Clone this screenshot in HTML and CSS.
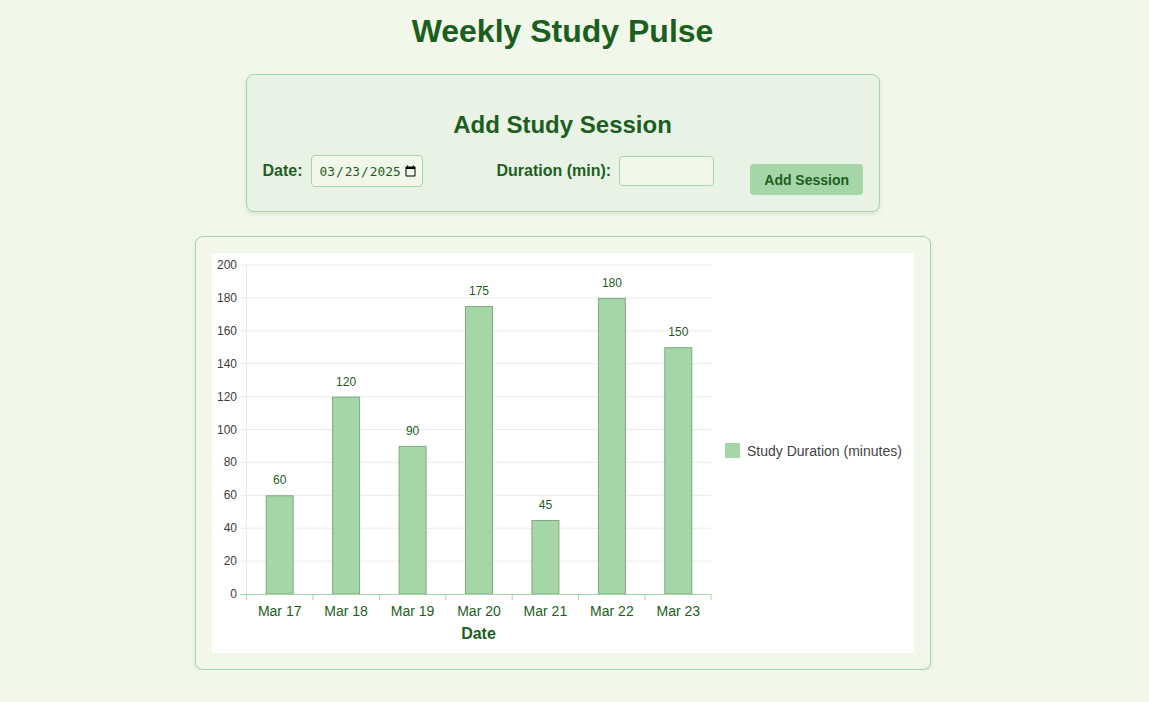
FILE: index.html
```html
<!DOCTYPE html>
<html lang="en">
<head>
    <meta charset="utf-8">
    <meta name="viewport" content="width=device-width, initial-scale=1">
    <title>Weekly Study Pulse</title>
    <link rel="stylesheet" href="styles.css">
</head>
<body>
    <div class="page">
        <h1 class="title">Weekly Study Pulse</h1>

        <!-- Session form -->
        <div class="form-card">
            <h2>Add Study Session</h2>
            <div class="form-row">
                <div class="form-group date-group">
                    <label for="date">Date:</label>
                    <input type="date" id="date" class="date-input" value="2025-03-23">
                </div>
                <div class="form-group duration-group">
                    <label for="duration">Duration (min):</label>
                    <input type="number" id="duration" class="duration-input">
                </div>
                <button class="add-btn">Add Session</button>
            </div>
        </div>

        <!-- Chart -->
        <div class="chart-card">
            <div class="chart-canvas">
                <svg width="702" height="400" viewBox="0 0 702 400">
                    <g class="grid">
                        <line x1="28" y1="12" x2="499" y2="12"/>
                        <line x1="28" y1="44.9" x2="499" y2="44.9"/>
                        <line x1="28" y1="77.8" x2="499" y2="77.8"/>
                        <line x1="28" y1="110.7" x2="499" y2="110.7"/>
                        <line x1="28" y1="143.6" x2="499" y2="143.6"/>
                        <line x1="28" y1="176.5" x2="499" y2="176.5"/>
                        <line x1="28" y1="209.4" x2="499" y2="209.4"/>
                        <line x1="28" y1="242.3" x2="499" y2="242.3"/>
                        <line x1="28" y1="275.2" x2="499" y2="275.2"/>
                        <line x1="28" y1="308.1" x2="499" y2="308.1"/>
                        <line x1="34.5" y1="12" x2="34.5" y2="341"/>
                    </g>
                    <g class="y-ticks">
                        <text x="25" y="16">200</text>
                        <text x="25" y="48.9">180</text>
                        <text x="25" y="81.8">160</text>
                        <text x="25" y="114.7">140</text>
                        <text x="25" y="147.6">120</text>
                        <text x="25" y="180.5">100</text>
                        <text x="25" y="213.4">80</text>
                        <text x="25" y="246.3">60</text>
                        <text x="25" y="279.2">40</text>
                        <text x="25" y="312.1">20</text>
                        <text x="25" y="345">0</text>
                    </g>
                    <g class="bars">
                        <rect x="54.2" y="242.8" width="27" height="98.2"/>
                        <rect x="120.6" y="144.1" width="27" height="196.9"/>
                        <rect x="187.1" y="193.4" width="27" height="147.6"/>
                        <rect x="253.5" y="53.6" width="27" height="287.4"/>
                        <rect x="319.9" y="267.5" width="27" height="73.5"/>
                        <rect x="386.4" y="45.4" width="27" height="295.6"/>
                        <rect x="452.8" y="94.7" width="27" height="246.3"/>
                    </g>
                    <g class="x-axis">
                        <line x1="28" y1="341.5" x2="499" y2="341.5"/>
                        <line x1="34.5" y1="341" x2="34.5" y2="347"/>
                        <line x1="100.9" y1="341" x2="100.9" y2="347"/>
                        <line x1="167.4" y1="341" x2="167.4" y2="347"/>
                        <line x1="233.8" y1="341" x2="233.8" y2="347"/>
                        <line x1="300.2" y1="341" x2="300.2" y2="347"/>
                        <line x1="366.6" y1="341" x2="366.6" y2="347"/>
                        <line x1="433.1" y1="341" x2="433.1" y2="347"/>
                        <line x1="499" y1="341" x2="499" y2="347"/>
                    </g>
                    <g class="values">
                        <text x="67.7" y="231">60</text>
                        <text x="134.1" y="132.5">120</text>
                        <text x="200.6" y="181.8">90</text>
                        <text x="267" y="42">175</text>
                        <text x="333.4" y="256">45</text>
                        <text x="399.9" y="33.8">180</text>
                        <text x="466.3" y="83.1">150</text>
                    </g>
                    <g class="x-ticks">
                        <text x="67.7" y="363">Mar 17</text>
                        <text x="134.1" y="363">Mar 18</text>
                        <text x="200.6" y="363">Mar 19</text>
                        <text x="267" y="363">Mar 20</text>
                        <text x="333.4" y="363">Mar 21</text>
                        <text x="399.9" y="363">Mar 22</text>
                        <text x="466.3" y="363">Mar 23</text>
                    </g>
                    <text class="x-title" x="266.5" y="386">Date</text>
                    <g class="legend">
                        <rect x="513" y="190" width="15" height="15"/>
                        <text x="535" y="203">Study Duration (minutes)</text>
                    </g>
                </svg>
            </div>
        </div>
    </div>
</body>
</html>
```

FILE: styles.css
```css
/* General Reset */
* {
    margin: 0;
    padding: 0;
    box-sizing: border-box;
}

body {
    font-family: 'Liberation Sans', Arial, sans-serif;
    background: #f1f8e9;
    color: #1b5e20;
}

.page {
    width: 1125px;
    padding-top: 13px;
}

/* Title */
.title {
    font-size: 32px;
    line-height: 37px;
    font-weight: 700;
    text-align: center;
    color: #1b5e20;
    margin-bottom: 24px;
}

/* Form Card */
.form-card {
    width: 634px;
    margin: 0 auto;
    padding: 16px;
    background: #e8f3e6;
    border: 1px solid #a5d6a7;
    border-radius: 8px;
    box-shadow: 0 2px 4px rgba(0, 0, 0, 0.1);
}

.form-card h2 {
    font-size: 24px;
    line-height: 28px;
    font-weight: 700;
    text-align: center;
    margin: 20px 0 8px;
}

.form-row {
    display: flex;
    align-items: center;
}

.form-group {
    display: flex;
    align-items: center;
    flex-shrink: 0;
    gap: 8px;
}

.form-group label {
    font-size: 16px;
    font-weight: 700;
    color: #1b5e20;
    white-space: nowrap;
}

.date-group {
    margin-right: 74px;
}

.duration-group {
    margin-right: 36px;
}

.date-input {
    width: 112px;
    height: 32px;
    padding: 0 3px 0 7px;
    font-family: 'DejaVu Sans Mono', monospace;
    font-size: 12.8px;
    color: #1b5e20;
    background: #f1f8e9;
    border: 1px solid #a5d6a7;
    border-radius: 4px;
}

.duration-input {
    width: 95px;
    height: 30px;
    padding: 0 6px;
    font-size: 14px;
    background: #f1f8e9;
    border: 1px solid #a5d6a7;
    border-radius: 4px;
}

.add-btn {
    flex-shrink: 0;
    width: 113px;
    height: 31px;
    margin-top: 17px;
    font-family: 'Liberation Sans', Arial, sans-serif;
    font-size: 14px;
    font-weight: 700;
    color: #1b5e20;
    background: #a5d6a7;
    border: none;
    border-radius: 4px;
}

/* Chart Card */
.chart-card {
    width: 736px;
    margin: 24px auto 0;
    padding: 16px;
    background: #f1f8e9;
    border: 1px solid #a5d6a7;
    border-radius: 8px;
    box-shadow: 0 2px 4px rgba(0, 0, 0, 0.1);
}

.chart-canvas {
    background: #ffffff;
    height: 400px;
}

.chart-canvas svg {
    display: block;
    font-family: 'Liberation Sans', Arial, sans-serif;
}

.grid line {
    stroke: #ebebeb;
    stroke-width: 1;
}

.y-ticks text {
    font-size: 12px;
    fill: #3d3d3d;
    text-anchor: end;
}

.bars rect {
    fill: #a5d6a7;
    stroke: #7fa882;
    stroke-width: 1;
}

.x-axis line {
    stroke: #a5d6a7;
    stroke-width: 1;
}

.values text {
    font-size: 12px;
    fill: #1b5e20;
    text-anchor: middle;
}

.x-ticks text {
    font-size: 14px;
    fill: #1b5e20;
    text-anchor: middle;
}

.x-title {
    font-size: 16px;
    font-weight: 700;
    fill: #1b5e20;
    text-anchor: middle;
}

.legend rect {
    fill: #a5d6a7;
}

.legend text {
    font-size: 14px;
    fill: #444444;
}
```
